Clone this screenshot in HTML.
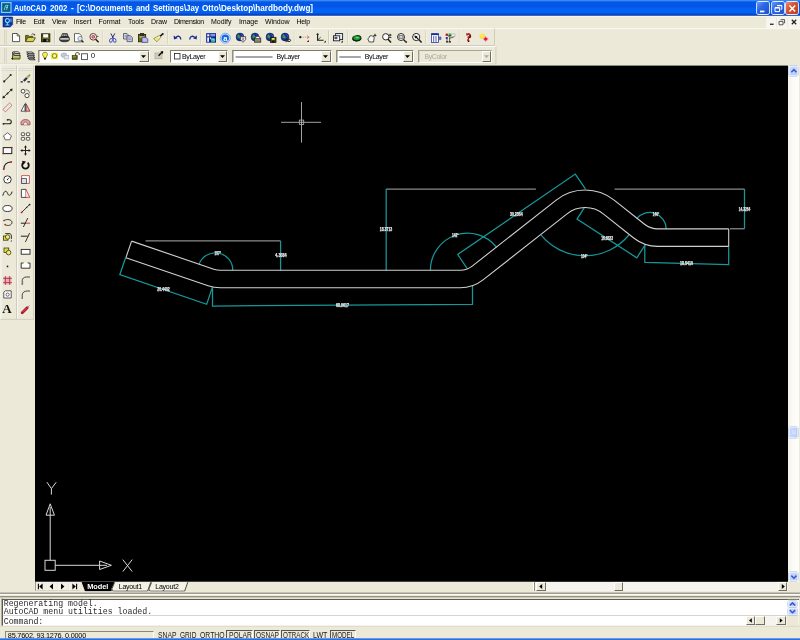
<!DOCTYPE html>
<html><head><meta charset="utf-8"><title>AutoCAD 2002 - hardbody.dwg</title>
<style>
html,body{margin:0;padding:0;background:#ece9d8;}
body{width:800px;height:640px;overflow:hidden;position:relative;font-family:'Liberation Sans',sans-serif;}
.a{position:absolute;display:block;}
.t{white-space:pre;}
svg{overflow:visible;}
#root{position:absolute;left:0;top:0;width:800px;height:640px;overflow:hidden;will-change:transform;}
</style></head><body><div id="root">
<svg class="a" style="left:0;top:0" width="800" height="17"><defs><linearGradient id="tg" x1="0" y1="0" x2="0" y2="1"><stop offset="0" stop-color="#4a9dff"/><stop offset="0.07" stop-color="#1a70f0"/><stop offset="0.15" stop-color="#0557e3"/><stop offset="0.42" stop-color="#0357e4"/><stop offset="0.58" stop-color="#0263f6"/><stop offset="0.8" stop-color="#025ff2"/><stop offset="0.89" stop-color="#024fda"/><stop offset="0.96" stop-color="#0138b4"/><stop offset="1" stop-color="#012a98"/></linearGradient></defs><rect x="0" y="0" width="800" height="15.8" fill="url(#tg)"/><rect x="0" y="15.9" width="800" height="1" fill="#f7f6f0"/></svg>
<svg class="a" style="left:1px;top:2px;" width="11" height="11" viewBox="0 0 11 11"><rect x="0.6" y="0.6" width="9.4" height="9.8" fill="#06607f" stroke="#86c9f4" stroke-width="1.2"/><path d="M3.2 8 L4.6 3.4 H7.4 M5 5.4 H7 M6.6 3.4 L5.6 8" stroke="#9fe0f0" stroke-width="0.8" fill="none"/></svg>
<span class="a t" id="t1" style="left:13.9px;top:3.80px;font-size:8.5px;line-height:8.5px;color:#fff;font-weight:bold;transform:scaleX(0.8576);transform-origin:0 0;">AutoCAD</span>
<span class="a t" id="t2" style="left:50px;top:3.80px;font-size:8.5px;line-height:8.5px;color:#fff;font-weight:bold;transform:scaleX(0.9249);transform-origin:0 0;">2002</span>
<span class="a t" id="t3" style="left:70.9px;top:3.80px;font-size:8.5px;line-height:8.5px;color:#fff;font-weight:bold;transform:scaleX(0.9846);transform-origin:0 0;">-</span>
<span class="a t" id="t4" style="left:77px;top:3.80px;font-size:8.5px;line-height:8.5px;color:#fff;font-weight:bold;transform:scaleX(0.9197);transform-origin:0 0;">[C:\Documents</span>
<span class="a t" id="t5" style="left:135.7px;top:3.80px;font-size:8.5px;line-height:8.5px;color:#fff;font-weight:bold;transform:scaleX(0.9190);transform-origin:0 0;">and</span>
<span class="a t" id="t6" style="left:152.6px;top:3.80px;font-size:8.5px;line-height:8.5px;color:#fff;font-weight:bold;transform:scaleX(0.9226);transform-origin:0 0;">Settings\Jay</span>
<span class="a t" id="t7" style="left:201.9px;top:3.80px;font-size:8.5px;line-height:8.5px;color:#fff;font-weight:bold;transform:scaleX(0.9576);transform-origin:0 0;">Otto\Desktop\hardbody.dwg]</span>
<div class="a" style="left:757.4px;top:2px;width:12px;height:12px;background:linear-gradient(135deg,#6c9cf5 0%,#2d68e6 40%,#1c4fd0 100%);border-radius:2px;box-shadow:0 0 0 0.9px #e4edff;"></div>
<svg class="a" style="left:757.1999999999999px;top:1.6px;" width="13" height="13" viewBox="0 0 13 13"><rect x="3" y="8.6" width="4.4" height="1.7" fill="#fff"/></svg>
<div class="a" style="left:771.8px;top:2px;width:12px;height:12px;background:linear-gradient(135deg,#6c9cf5 0%,#2d68e6 40%,#1c4fd0 100%);border-radius:2px;box-shadow:0 0 0 0.9px #e4edff;"></div>
<svg class="a" style="left:771.5999999999999px;top:1.6px;" width="13" height="13" viewBox="0 0 13 13"><path d="M5.2 3.4 h4.6 v3.8 h-1.2 M3 5.6 h4.6 v4 h-4.6 z" fill="none" stroke="#fff" stroke-width="1"/><path d="M5.2 3.6 h4.6 M3 5.9 h4.6" stroke="#fff" stroke-width="1.3"/></svg>
<div class="a" style="left:786.3px;top:2px;width:12px;height:12px;background:linear-gradient(135deg,#e8917a 0%,#d9532f 40%,#c13a18 100%);border-radius:2px;box-shadow:0 0 0 0.9px #e4edff;"></div>
<svg class="a" style="left:786.0999999999999px;top:1.6px;" width="13" height="13" viewBox="0 0 13 13"><path d="M3.4 3.6 L9.2 9.6 M9.2 3.6 L3.4 9.6" stroke="#fff" stroke-width="1.5"/></svg>
<svg class="a" style="left:2.5px;top:17.2px;" width="10" height="10.4" viewBox="0 0 10 10.4"><path d="M0 0 H9.6 V7.6 L7.2 10 H0 Z" fill="#0a3aa0"/><path d="M0 0 H9.6 V7.6 L7.2 10 H0 Z" fill="none" stroke="#052a80" stroke-width="0.6"/><circle cx="4.4" cy="3.6" r="2" fill="none" stroke="#7fd0ff" stroke-width="1.1"/><path d="M4.4 5.6 V8.6 M2.4 8 H6.4" stroke="#7fd0ff" stroke-width="1.1"/><path d="M8 1.6 V5" stroke="#7fd0ff" stroke-width="0.9"/></svg>
<span class="a t" id="t8" style="left:16px;top:17.97px;font-size:7px;line-height:7px;color:#000;letter-spacing:-0.366px;">File</span>
<span class="a t" id="t9" style="left:33.5px;top:17.97px;font-size:7px;line-height:7px;color:#000;letter-spacing:-0.304px;">Edit</span>
<span class="a t" id="t10" style="left:52px;top:17.97px;font-size:7px;line-height:7px;color:#000;letter-spacing:-0.156px;">View</span>
<span class="a t" id="t11" style="left:73.5px;top:17.97px;font-size:7px;line-height:7px;color:#000;letter-spacing:0.088px;">Insert</span>
<span class="a t" id="t12" style="left:98.5px;top:17.97px;font-size:7px;line-height:7px;color:#000;letter-spacing:-0.031px;">Format</span>
<span class="a t" id="t13" style="left:128px;top:17.97px;font-size:7px;line-height:7px;color:#000;letter-spacing:-0.076px;">Tools</span>
<span class="a t" id="t14" style="left:151px;top:17.97px;font-size:7px;line-height:7px;color:#000;letter-spacing:-0.098px;">Draw</span>
<span class="a t" id="t15" style="left:174px;top:17.97px;font-size:7px;line-height:7px;color:#000;letter-spacing:-0.362px;">Dimension</span>
<span class="a t" id="t16" style="left:211px;top:17.97px;font-size:7px;line-height:7px;color:#000;letter-spacing:-0.023px;">Modify</span>
<span class="a t" id="t17" style="left:239px;top:17.97px;font-size:7px;line-height:7px;color:#000;letter-spacing:-0.104px;">Image</span>
<span class="a t" id="t18" style="left:265px;top:17.97px;font-size:7px;line-height:7px;color:#000;letter-spacing:-0.074px;">Window</span>
<span class="a t" id="t19" style="left:296.5px;top:17.97px;font-size:7px;line-height:7px;color:#000;letter-spacing:-0.259px;">Help</span>
<svg class="a" style="left:766px;top:17px" width="34" height="11"><rect x="0.00" y="0.20" width="34.00" height="10.80" fill="#f6f5ef"/></svg>
<svg class="a" style="left:776px;top:17px" width="1" height="11"><rect x="0.30" y="0.60" width="0.70" height="10.00" fill="#e6e4d8"/></svg>
<svg class="a" style="left:787px;top:17px" width="1" height="11"><rect x="0.30" y="0.60" width="0.70" height="10.00" fill="#e6e4d8"/></svg>
<svg class="a" style="left:766px;top:17px;" width="34" height="10.5" viewBox="0 0 34 10.5"><rect x="4" y="6.6" width="3.6" height="1.3" fill="#222"/><path d="M14.6 2.6 h4 v3.4 h-1 M13 4.4 h4 v3.4 h-4 z" fill="none" stroke="#333" stroke-width="0.8"/><path d="M25.8 2.8 L30.2 7.2 M30.2 2.8 L25.8 7.2" stroke="#222" stroke-width="1.3"/></svg>
<svg class="a" style="left:0px;top:28px" width="800" height="2"><rect x="0.00" y="0.20" width="800.00" height="0.90" fill="#fbfaf6"/></svg>
<svg class="a" style="left:0px;top:45px" width="495" height="1"><rect x="0.00" y="0.10" width="494.60" height="0.70" fill="#c5c2b0"/></svg>
<svg class="a" style="left:494px;top:28px" width="1" height="18"><rect x="0.30" y="0.60" width="0.70" height="16.60" fill="#c5c2b0"/></svg>
<svg class="a" style="left:0px;top:46px" width="496" height="1"><rect x="0.00" y="0.00" width="496.00" height="0.80" fill="#fff"/></svg>
<svg class="a" style="left:0px;top:63px" width="496" height="2"><rect x="0.00" y="0.60" width="496.00" height="0.60" fill="#d9d6c4"/></svg>
<svg class="a" style="left:495px;top:46px" width="2" height="19"><rect x="0.60" y="0.40" width="0.70" height="18.00" fill="#c5c2b0"/></svg>
<svg class="a" style="left:3px;top:29px" width="1" height="16"><rect x="0.10" y="0.80" width="0.70" height="15.00" fill="#fdfcf8"/></svg>
<svg class="a" style="left:3px;top:29px" width="2" height="16"><rect x="0.80" y="0.80" width="0.60" height="15.00" fill="#b9b6a2"/></svg>
<svg class="a" style="left:5px;top:29px" width="1" height="16"><rect x="0.00" y="0.80" width="0.70" height="15.00" fill="#fdfcf8"/></svg>
<svg class="a" style="left:5px;top:29px" width="2" height="16"><rect x="0.70" y="0.80" width="0.60" height="15.00" fill="#b9b6a2"/></svg>
<svg class="a" style="left:3px;top:47px" width="1" height="17"><rect x="0.10" y="0.80" width="0.70" height="15.60" fill="#fdfcf8"/></svg>
<svg class="a" style="left:3px;top:47px" width="2" height="17"><rect x="0.80" y="0.80" width="0.60" height="15.60" fill="#b9b6a2"/></svg>
<svg class="a" style="left:5px;top:47px" width="1" height="17"><rect x="0.00" y="0.80" width="0.70" height="15.60" fill="#fdfcf8"/></svg>
<svg class="a" style="left:5px;top:47px" width="2" height="17"><rect x="0.70" y="0.80" width="0.60" height="15.60" fill="#b9b6a2"/></svg>
<svg class="a" style="left:0px;top:64px" width="35" height="256"><rect x="0.00" y="0.80" width="35.00" height="255.00" fill="#ece9d8"/></svg>
<svg class="a" style="left:12px;top:33px;" width="11" height="11" viewBox="0 0 11 11"><path d="M0.5 0.5 H5.2 L7.6 3 V8.6 H0.5 Z" fill="#fff" stroke="#333" stroke-width="0.8"/><path d="M5.2 0.5 V3 H7.6" fill="none" stroke="#333" stroke-width="0.7"/></svg>
<svg class="a" style="left:25px;top:33px;" width="11" height="11" viewBox="0 0 11 11"><path d="M0.6 8.6 V2.4 H3.4 L4.2 3.4 H7.8 V4.6" fill="#7a7a18" stroke="#3a3a08" stroke-width="0.8"/><path d="M0.6 8.6 L2.6 4.8 H10.4 L8.2 8.6 Z" fill="#d4d448" stroke="#3a3a08" stroke-width="0.8"/><path d="M3.2 5.6 H9" stroke="#f4f49a" stroke-width="0.6"/><path d="M6.4 1.8 C7.4 0.4 9 0.6 9.6 2" stroke="#222" stroke-width="0.7" fill="none"/><path d="M8.6 2.2 L10.2 2.6 L10 0.9 Z" fill="#111"/></svg>
<svg class="a" style="left:41px;top:33px;" width="11" height="11" viewBox="0 0 11 11"><rect x="0.5" y="0.8" width="8.4" height="8" fill="#4a4a10" stroke="#1e1e00" stroke-width="0.8"/><rect x="2.2" y="1.2" width="5" height="3.4" fill="#fff"/><rect x="2.2" y="5.9" width="5" height="3" fill="#0a0a0a"/><rect x="5.6" y="6.4" width="1" height="2" fill="#ddd"/><path d="M1 5.2 H8.4" stroke="#9a9a30" stroke-width="0.6"/></svg>
<svg class="a" style="left:54px;top:30px" width="1" height="14"><rect x="0.30" y="0.50" width="0.65" height="13.50" fill="#bdb9a4"/></svg>
<svg class="a" style="left:54px;top:30px" width="2" height="14"><rect x="0.95" y="0.50" width="0.65" height="13.50" fill="#fbfaf4"/></svg>
<svg class="a" style="left:58.8px;top:33px;" width="11" height="11" viewBox="0 0 11 11"><path d="M2.2 3.6 L3.4 0.6 H8.2 L9.2 3.6 Z" fill="#555" stroke="#2a2a2a" stroke-width="0.7"/><path d="M4 1.4 L3.4 3 M5.6 1.4 L5.2 3 M7.2 1.4 L7 3" stroke="#ddd" stroke-width="0.7"/><path d="M0.6 5.6 C0.6 4 2 3.6 2.8 3.6 H8.6 C9.6 3.6 10.4 4.2 10.4 5.6 V7.2 C9 9.4 2 9.4 0.6 7.2 Z" fill="#3a3a3a" stroke="#1a1a1a" stroke-width="0.6"/><path d="M1.2 5.9 H9.8" stroke="#f4f4f4" stroke-width="1.3"/></svg>
<svg class="a" style="left:73.8px;top:33px;" width="11" height="11" viewBox="0 0 11 11"><path d="M0.5 0.6 H5.2 L7.6 2.8 V8.8 H0.5 Z" fill="#fff" stroke="#444" stroke-width="0.8"/><circle cx="6" cy="5.6" r="2.2" fill="#d4e8fc" stroke="#778" stroke-width="0.7"/><path d="M7.6 7.4 L9.4 9.4" stroke="#111" stroke-width="1.3"/></svg>
<svg class="a" style="left:89.4px;top:33px;" width="11" height="11" viewBox="0 0 11 11"><circle cx="4.2" cy="3.8" r="3.3" fill="#fff" stroke="#4a4436" stroke-width="1"/><circle cx="4.2" cy="3.8" r="1.9" fill="#d03048"/><path d="M3.4 3.8 H5 M4.2 3 V4.6" stroke="#fbd0d0" stroke-width="0.6"/><path d="M6.6 6.2 L9.6 9.2" stroke="#222" stroke-width="1.5"/><path d="M7.4 3.4 H9.4" stroke="#555" stroke-width="1"/></svg>
<svg class="a" style="left:102px;top:30px" width="2" height="14"><rect x="0.70" y="0.50" width="0.65" height="13.50" fill="#bdb9a4"/></svg>
<svg class="a" style="left:103px;top:30px" width="1" height="14"><rect x="0.35" y="0.50" width="0.65" height="13.50" fill="#fbfaf4"/></svg>
<svg class="a" style="left:109.4px;top:33px;" width="11" height="11" viewBox="0 0 11 11"><path d="M1.8 0.4 L4.6 5.8 M5.8 0.4 L3 5.8" stroke="#2a2a7a" stroke-width="1"/><ellipse cx="2" cy="7.4" rx="1.4" ry="1.9" fill="none" stroke="#4a55c8" stroke-width="0.95" transform="rotate(20 2 7.4)"/><ellipse cx="5.6" cy="7.4" rx="1.4" ry="1.9" fill="none" stroke="#4a55c8" stroke-width="0.95" transform="rotate(-20 5.6 7.4)"/></svg>
<svg class="a" style="left:123px;top:33px;" width="11" height="11" viewBox="0 0 11 11"><path d="M0.5 0.5 H4 L5.6 2.2 V6 H0.5 Z" fill="#d0d4ec" stroke="#3a3a55" stroke-width="0.7"/><path d="M1.6 2.4 H4 M1.6 3.8 H4.4" stroke="#667" stroke-width="0.5"/><path d="M4 2.8 H7.6 L9.4 4.6 V8.6 H4 Z" fill="#c4c8ee" stroke="#3a3a55" stroke-width="0.7"/><path d="M5.2 5 H8 M5.2 6.4 H8.2" stroke="#667" stroke-width="0.5"/></svg>
<svg class="a" style="left:138px;top:33px;" width="11" height="11" viewBox="0 0 11 11"><rect x="0.5" y="1.4" width="7.2" height="7.4" fill="#6a6a1a" stroke="#222200" stroke-width="0.8"/><rect x="2.2" y="0.3" width="3.6" height="2" fill="#333" stroke="#111" stroke-width="0.5"/><rect x="1.6" y="3" width="4.8" height="2" fill="#a8a850"/><path d="M4 4.4 H7.8 L9.8 6 V9.4 H4 Z" fill="#b8bcf4" stroke="#3a3a80" stroke-width="0.7"/></svg>
<svg class="a" style="left:153px;top:33px;" width="11" height="11" viewBox="0 0 11 11"><path d="M9.6 1 L6.8 3.6" stroke="#111" stroke-width="1.5"/><circle cx="9.8" cy="0.9" r="0.9" fill="#111"/><path d="M6.4 2.4 L8 4 L4 8.8 L0.6 5.6 Z" fill="#f2f2a4" stroke="#7a7a30" stroke-width="0.7"/><path d="M2 6.4 L3.2 7.6 M3.4 5 L4.8 6.4" stroke="#a8a850" stroke-width="0.5"/></svg>
<svg class="a" style="left:167px;top:30px" width="1" height="14"><rect x="0.10" y="0.50" width="0.65" height="13.50" fill="#bdb9a4"/></svg>
<svg class="a" style="left:167px;top:30px" width="2" height="14"><rect x="0.75" y="0.50" width="0.65" height="13.50" fill="#fbfaf4"/></svg>
<svg class="a" style="left:172.5px;top:33px;" width="11" height="11" viewBox="0 0 11 11"><path d="M2.8 4.6 C4.4 2.4 7.8 2.8 7.8 6.4" fill="none" stroke="#1c2a9a" stroke-width="1.35"/><path d="M0.6 2.6 L1 6.6 L4.6 5.2 Z" fill="#1c2a9a"/></svg>
<svg class="a" style="left:187.5px;top:33px;" width="11" height="11" viewBox="0 0 11 11"><path d="M6.8 4.6 C5.2 2.4 1.8 2.8 1.8 6.4" fill="none" stroke="#1c2a9a" stroke-width="1.35"/><path d="M9 2.6 L8.6 6.6 L5 5.2 Z" fill="#1c2a9a"/></svg>
<svg class="a" style="left:200px;top:30px" width="1" height="14"><rect x="0.10" y="0.50" width="0.65" height="13.50" fill="#bdb9a4"/></svg>
<svg class="a" style="left:200px;top:30px" width="2" height="14"><rect x="0.75" y="0.50" width="0.65" height="13.50" fill="#fbfaf4"/></svg>
<svg class="a" style="left:205.6px;top:33px;" width="11" height="11" viewBox="0 0 11 11"><rect x="0.2" y="0.2" width="9.8" height="9.4" fill="#0c1a8c"/><rect x="1.2" y="1.2" width="2.2" height="2.2" fill="#e8f0ff"/><rect x="4.4" y="1" width="4.8" height="2.4" fill="#7a9ae8"/><rect x="1.2" y="4.4" width="1.8" height="4.4" fill="#f0f4ff"/><rect x="3.8" y="4.2" width="1.4" height="2" fill="#b8c8f8"/><circle cx="7" cy="7" r="2.3" fill="#30b0a0"/><path d="M5.6 6.4 C6.6 5.6 7.8 7.6 8.8 7" stroke="#d8ffe8" stroke-width="0.6" fill="none"/></svg>
<svg class="a" style="left:220px;top:32.6px;" width="11" height="11" viewBox="0 0 11 11"><circle cx="5.3" cy="5.2" r="5" fill="#d4e6ff" stroke="#4a90f0" stroke-width="0.7"/><circle cx="5.3" cy="5.2" r="3.7" fill="#1466e0"/><text x="5.3" y="7.6" font-family="Liberation Sans,sans-serif" font-weight="bold" font-size="7.6" text-anchor="middle" fill="#fff">a</text></svg>
<svg class="a" style="left:235.6px;top:33px;" width="11" height="11" viewBox="0 0 11 11"><circle cx="4" cy="4" r="3.9" fill="#1c2c9c" stroke="#101850" stroke-width="0.6"/><path d="M2.2 1.2 C4.2 1.6 3.4 3.6 5.2 4 C4.6 6 2.8 6 1.4 4.6 C1.2 3.4 1.4 2.2 2.2 1.2 Z" fill="#2c9a50"/><path d="M5.4 1.4 C6.4 1.8 6.8 2.8 6.6 3.6" stroke="#5878e0" stroke-width="0.6" fill="none"/><path d="M4.4 3.6 H9.6 V6.6 L7 9.4 L4.4 6.6 Z" fill="#e8e8e8" stroke="#223" stroke-width="0.7"/><path d="M7 4.6 V7.6" stroke="#223" stroke-width="0.8"/></svg>
<svg class="a" style="left:250.6px;top:33px;" width="11" height="11" viewBox="0 0 11 11"><circle cx="4" cy="4" r="3.9" fill="#1c2c9c" stroke="#101850" stroke-width="0.6"/><path d="M2.2 1.2 C4.2 1.6 3.4 3.6 5.2 4 C4.6 6 2.8 6 1.4 4.6 C1.2 3.4 1.4 2.2 2.2 1.2 Z" fill="#2c9a50"/><path d="M5.4 1.4 C6.4 1.8 6.8 2.8 6.6 3.6" stroke="#5878e0" stroke-width="0.6" fill="none"/><rect x="3.4" y="5" width="6.4" height="4.2" fill="#8a8a6a" stroke="#222" stroke-width="0.7"/><path d="M4.6 5 L5.2 3.4 H8.4 L8.8 5" fill="#fff" stroke="#222" stroke-width="0.6"/></svg>
<svg class="a" style="left:265.6px;top:33px;" width="11" height="11" viewBox="0 0 11 11"><circle cx="4" cy="4" r="3.9" fill="#1c2c9c" stroke="#101850" stroke-width="0.6"/><path d="M2.2 1.2 C4.2 1.6 3.4 3.6 5.2 4 C4.6 6 2.8 6 1.4 4.6 C1.2 3.4 1.4 2.2 2.2 1.2 Z" fill="#2c9a50"/><path d="M5.4 1.4 C6.4 1.8 6.8 2.8 6.6 3.6" stroke="#5878e0" stroke-width="0.6" fill="none"/><rect x="4.4" y="4.6" width="5.6" height="5" fill="#4a4a10" stroke="#111" stroke-width="0.7"/><rect x="5.8" y="5" width="2.8" height="1.8" fill="#e8e870"/><rect x="6" y="7.8" width="2.4" height="1.6" fill="#111"/></svg>
<svg class="a" style="left:280.6px;top:33px;" width="11" height="11" viewBox="0 0 11 11"><circle cx="4" cy="4" r="3.9" fill="#1c2c9c" stroke="#101850" stroke-width="0.6"/><path d="M2.2 1.2 C4.2 1.6 3.4 3.6 5.2 4 C4.6 6 2.8 6 1.4 4.6 C1.2 3.4 1.4 2.2 2.2 1.2 Z" fill="#2c9a50"/><path d="M5.4 1.4 C6.4 1.8 6.8 2.8 6.6 3.6" stroke="#5878e0" stroke-width="0.6" fill="none"/><path d="M4.2 7.4 C4.2 5.6 7 5.6 7 7.4 C7 9 4.2 9 4.2 7.4 M6.6 7.4 C6.6 5.6 9.6 5.6 9.6 7.4 C9.6 9 6.6 9 6.6 7.4" fill="none" stroke="#222" stroke-width="1"/></svg>
<svg class="a" style="left:293px;top:30px" width="2" height="14"><rect x="0.90" y="0.50" width="0.65" height="13.50" fill="#bdb9a4"/></svg>
<svg class="a" style="left:294px;top:30px" width="2" height="14"><rect x="0.55" y="0.50" width="0.65" height="13.50" fill="#fbfaf4"/></svg>
<svg class="a" style="left:299px;top:33px;" width="11" height="11" viewBox="0 0 11 11"><path d="M1.6 4.2 H9.6" stroke="#d87878" stroke-width="0.7" stroke-dasharray="1.4 0.7"/><circle cx="1.3" cy="4.2" r="1.1" fill="#111"/><path d="M8 2.8 L10.2 4.2 L8 5.6" fill="none" stroke="#c85050" stroke-width="0.7"/><path d="M9.8 7 L9.8 9 L7.8 9 Z" fill="#111"/></svg>
<svg class="a" style="left:315.6px;top:33px;" width="11" height="11" viewBox="0 0 11 11"><path d="M1.6 0.8 V7.2 H7.6" fill="none" stroke="#1a1a1a" stroke-width="1.1"/><path d="M1.6 7.2 L4.8 4" stroke="#222" stroke-width="0.7"/><path d="M9.8 7.4 L9.8 9.4 L7.8 9.4 Z" fill="#111"/><path d="M0.4 2 L1.6 0.2 L2.8 2" fill="none" stroke="#222" stroke-width="0.6"/></svg>
<svg class="a" style="left:328px;top:30px" width="1" height="14"><rect x="0.30" y="0.50" width="0.65" height="13.50" fill="#bdb9a4"/></svg>
<svg class="a" style="left:328px;top:30px" width="2" height="14"><rect x="0.95" y="0.50" width="0.65" height="13.50" fill="#fbfaf4"/></svg>
<svg class="a" style="left:333px;top:33px;" width="11" height="11" viewBox="0 0 11 11"><rect x="2.6" y="0.6" width="7" height="6" fill="#eef0f8" stroke="#1a1a2a" stroke-width="0.9"/><rect x="0.5" y="2.8" width="6.2" height="5" fill="#fff" stroke="#1a1a2a" stroke-width="0.9"/><rect x="1.4" y="3.8" width="3" height="2.4" fill="#556"/><path d="M9.8 7.6 L9.8 9.6 L7.8 9.6 Z" fill="#111"/></svg>
<svg class="a" style="left:347px;top:30px" width="1" height="14"><rect x="0.10" y="0.50" width="0.65" height="13.50" fill="#bdb9a4"/></svg>
<svg class="a" style="left:347px;top:30px" width="2" height="14"><rect x="0.75" y="0.50" width="0.65" height="13.50" fill="#fbfaf4"/></svg>
<svg class="a" style="left:352px;top:33px;" width="11" height="11" viewBox="0 0 11 11"><ellipse cx="4.8" cy="5.2" rx="4.2" ry="2.6" fill="#1c9030" stroke="#083c10" stroke-width="1" transform="rotate(-8 4.8 5.2)"/><ellipse cx="5.2" cy="4.6" rx="1.8" ry="0.9" fill="#6fd07a"/><path d="M0.6 5.8 C2 8.6 7.6 8.6 9.2 5.4" fill="none" stroke="#04280a" stroke-width="1.1"/></svg>
<svg class="a" style="left:367px;top:33px;" width="11" height="11" viewBox="0 0 11 11"><path d="M2.2 9 L0.8 5.8 L2.2 4.6 L2.8 3 L4.2 2.6 L5.2 3.2 L6.4 3 L7.2 4.8 L6.6 9 Z" fill="#f6f6f2" stroke="#2a2a2a" stroke-width="0.8"/><path d="M8 0.2 L8.5 1.7 L10 2.2 L8.5 2.7 L8 4.2 L7.5 2.7 L6 2.2 L7.5 1.7 Z" fill="#111"/></svg>
<svg class="a" style="left:382px;top:33px;" width="11" height="11" viewBox="0 0 11 11"><circle cx="3.8" cy="3.8" r="3.2" fill="#fbfbfb" stroke="#2a2a2a" stroke-width="1"/><path d="M6 6.2 L9 9.4" stroke="#1a1a1a" stroke-width="1.5"/><path d="M8.2 0.8 V3.4 M6.9 2.1 H9.5 M7 4.6 H9.4" stroke="#111" stroke-width="0.8"/></svg>
<svg class="a" style="left:397px;top:33px;" width="11" height="11" viewBox="0 0 11 11"><circle cx="4" cy="4" r="3.5" fill="#fbfbfb" stroke="#2a2a2a" stroke-width="1"/><rect x="2" y="2.8" width="4" height="2.4" fill="#eee" stroke="#333" stroke-width="0.7"/><path d="M6.6 6.6 L8.6 8.8" stroke="#1a1a1a" stroke-width="1.4"/><path d="M10 7.8 L10 9.8 L8 9.8 Z" fill="#111"/></svg>
<svg class="a" style="left:412px;top:33px;" width="11" height="11" viewBox="0 0 11 11"><circle cx="4.2" cy="4" r="3.6" fill="#fbfbfb" stroke="#2a2a2a" stroke-width="1"/><path d="M2.2 2.6 L5.6 3.2 L3.2 5.6 Z" fill="#111"/><path d="M4 4 L6.2 6" stroke="#111" stroke-width="1.1"/><path d="M6.8 6.6 L9.6 9.6" stroke="#1a1a1a" stroke-width="1.5"/></svg>
<svg class="a" style="left:425px;top:30px" width="1" height="14"><rect x="0.10" y="0.50" width="0.65" height="13.50" fill="#bdb9a4"/></svg>
<svg class="a" style="left:425px;top:30px" width="2" height="14"><rect x="0.75" y="0.50" width="0.65" height="13.50" fill="#fbfaf4"/></svg>
<svg class="a" style="left:430.6px;top:33px;" width="11" height="11" viewBox="0 0 11 11"><rect x="0.5" y="0.6" width="7" height="8.8" fill="#fff" stroke="#2a3aa0" stroke-width="0.8"/><rect x="0.5" y="0.6" width="7" height="1.5" fill="#1a2a90"/><path d="M2.7 3 V8.8 M5 3 V8.8" stroke="#4a5ac0" stroke-width="1"/><path d="M8.2 4 H10 V6.6 H8.2 Z" fill="#6a78c0" stroke="#2a3a80" stroke-width="0.5"/></svg>
<svg class="a" style="left:445px;top:33px;" width="11" height="11" viewBox="0 0 11 11"><rect x="0.6" y="0.6" width="2.4" height="2.4" fill="#b03030"/><rect x="3.6" y="0.4" width="2.2" height="3.4" fill="#38a038"/><rect x="0.8" y="4" width="2" height="2" fill="#3030b0"/><path d="M3 3 L7.6 2 M4.6 4 V8.4 M2 6 V8.4 M4.6 5.4 L9.6 3.6" stroke="#222" stroke-width="0.7"/><rect x="6.4" y="1" width="3.6" height="2.4" fill="#f0f0f0" stroke="#888" stroke-width="0.4"/><path d="M1 8.8 H3.2 M3.8 8.8 H6" stroke="#111" stroke-width="1.2"/></svg>
<svg class="a" style="left:458px;top:30px" width="2" height="14"><rect x="0.90" y="0.50" width="0.65" height="13.50" fill="#bdb9a4"/></svg>
<svg class="a" style="left:459px;top:30px" width="2" height="14"><rect x="0.55" y="0.50" width="0.65" height="13.50" fill="#fbfaf4"/></svg>
<span class="a" style="left:465.6px;top:31.0px;font-size:11.8px;line-height:12px;font-weight:bold;color:#c41414;font-family:'Liberation Serif',serif;text-shadow:0.5px 0.5px 0 #400;">?</span>
<svg class="a" style="left:479.4px;top:33px;" width="11" height="11" viewBox="0 0 11 11"><rect x="1.4" y="1.6" width="8" height="7.6" fill="#e4e8f4" opacity="0.7"/><circle cx="3.2" cy="3.2" r="2.7" fill="#f8e23c"/><circle cx="2.6" cy="2.6" r="1" fill="#fdf6a0"/><path d="M6.6 2.8 L10 6 L6.6 9.2 L3.4 6 Z" fill="#f6b4bc"/><path d="M6.6 4 L8.8 6 L6.6 8 L4.6 6 Z" fill="#e41c1c"/></svg>
<svg class="a" style="left:10.9px;top:51.2px;" width="11" height="11" viewBox="0 0 11 11"><path d="M2.4 0.8 H7.2 L9.2 2.6 H4.4 Z" fill="#fafafa" stroke="#1a1a1a" stroke-width="0.8"/><path d="M2 2.8 H7.4 L9.4 4.6 H4 Z" fill="#eee" stroke="#1a1a1a" stroke-width="0.8"/><path d="M1.6 4.8 H9 V8 H1.6 Z" fill="#dede50" stroke="#2a2a00" stroke-width="0.8"/><path d="M2.2 5.9 H8.4" stroke="#fafae0" stroke-width="0.6"/><path d="M2.2 7 H8.4" stroke="#4a4a08" stroke-width="0.6"/><path d="M0 7.6 L2 9 L1.9 6.6 Z" fill="#111"/><path d="M1.6 0.8 V4.6" stroke="#1a1a1a" stroke-width="0.8"/></svg>
<svg class="a" style="left:25.9px;top:51.2px;" width="11" height="11" viewBox="0 0 11 11"><path d="M0.6 1 H6 L8.4 2.8 H3 Z" fill="#fafafa" stroke="#1a1a1a" stroke-width="0.8"/><path d="M0.8 3 H6.2 L8.6 4.8 H3.2 Z" fill="#e8e8e8" stroke="#1a1a1a" stroke-width="0.8"/><path d="M1 5 H6.6 L9 6.8 H3.4 Z" fill="#dcdcdc" stroke="#1a1a1a" stroke-width="0.8"/><path d="M1.8 7.2 H7 L9.2 8.8 H4 Z" fill="#ccc" stroke="#1a1a1a" stroke-width="0.8"/></svg>
<svg class="a" style="left:2.3px;top:73.1px;" width="11" height="11" viewBox="0 0 11 11"><path d="M2.2 8.4 L8.7 2" stroke="#222" stroke-width="0.9"/><circle cx="2.2" cy="8.4" r="1.05" fill="#222"/><circle cx="8.7" cy="2" r="1.05" fill="#222"/></svg>
<svg class="a" style="left:2.3px;top:87.5px;" width="11" height="11" viewBox="0 0 11 11"><path d="M1.4 9.4 L9.6 1.6" stroke="#222" stroke-width="0.9"/><path d="M0.4 10.4 L0.9 7.4 L3.4 9.8 Z M10.6 0.6 L10.1 3.6 L7.6 1.2 Z" fill="#222"/><circle cx="5.5" cy="5.5" r="0.9" fill="#222"/></svg>
<svg class="a" style="left:2.3px;top:101.89999999999999px;" width="11" height="11" viewBox="0 0 11 11"><path d="M1 7.4 L7.6 1 L10 3.4 L3.4 9.8 Z" fill="#fbf4f4" stroke="#9a4a4a" stroke-width="0.7"/><path d="M2.4 8.4 L8.6 2.4" stroke="#caa" stroke-width="0.5"/></svg>
<svg class="a" style="left:2.3px;top:116.3px;" width="11" height="11" viewBox="0 0 11 11"><path d="M1.4 7.8 H7.2 C10 7.8 10 3.8 7.2 3.8 H6" fill="none" stroke="#222" stroke-width="1.1"/><circle cx="1.4" cy="7.8" r="0.9" fill="#222"/><circle cx="5.6" cy="3.8" r="0.9" fill="#222"/></svg>
<svg class="a" style="left:2.3px;top:130.7px;" width="11" height="11" viewBox="0 0 11 11"><path d="M5.5 1.8 L9.4 4.8 L7.8 8.8 H3.2 L1.6 4.8 Z" fill="#fff" stroke="#3a3a3a" stroke-width="0.75"/></svg>
<svg class="a" style="left:2.3px;top:145.1px;" width="11" height="11" viewBox="0 0 11 11"><rect x="1.2" y="2.6" width="8.6" height="6" fill="#f8f8f8" stroke="#222" stroke-width="1"/><circle cx="1.2" cy="8.6" r="0.8" fill="#c02020"/><circle cx="9.8" cy="2.6" r="0.8" fill="#c02020"/></svg>
<svg class="a" style="left:2.3px;top:159.5px;" width="11" height="11" viewBox="0 0 11 11"><path d="M1.8 9 C1.8 4.8 4.8 2 9 2" fill="none" stroke="#222" stroke-width="1.1"/><circle cx="1.8" cy="9.2" r="0.9" fill="#c02020"/><circle cx="9.2" cy="2" r="0.9" fill="#c02020"/></svg>
<svg class="a" style="left:2.3px;top:173.89999999999998px;" width="11" height="11" viewBox="0 0 11 11"><circle cx="5.5" cy="5.5" r="3.7" fill="#fff" stroke="#222" stroke-width="0.9"/><path d="M5.5 5.5 L7.6 3.4" stroke="#222" stroke-width="0.7"/><circle cx="5.5" cy="5.5" r="0.7" fill="#222"/></svg>
<svg class="a" style="left:2.3px;top:188.3px;" width="11" height="11" viewBox="0 0 11 11"><path d="M0.8 7.6 C2.4 2 4.4 2.4 5.6 5.4 C6.8 8.4 8.6 8 10.2 3.6" fill="none" stroke="#222" stroke-width="1"/></svg>
<svg class="a" style="left:2.3px;top:202.7px;" width="11" height="11" viewBox="0 0 11 11"><ellipse cx="5.5" cy="5.5" rx="4.6" ry="3" fill="#fff" stroke="#222" stroke-width="0.9"/></svg>
<svg class="a" style="left:2.3px;top:217.1px;" width="11" height="11" viewBox="0 0 11 11"><path d="M3 7.6 C6 9.6 10 8 10 5.4 C10 2.6 5 1.6 2 3.6" fill="none" stroke="#222" stroke-width="0.9"/><circle cx="3" cy="7.6" r="0.8" fill="#c02020"/><circle cx="2" cy="3.6" r="0.8" fill="#c02020"/></svg>
<svg class="a" style="left:2.3px;top:231.5px;" width="11" height="11" viewBox="0 0 11 11"><rect x="1.4" y="4" width="4.6" height="4.2" fill="#e0e040" stroke="#222" stroke-width="0.7"/><circle cx="5.6" cy="5" r="2.2" fill="#f0f060" stroke="#222" stroke-width="0.7"/><path d="M3.2 1.6 H7 C8.8 1.6 9.4 2.6 9.4 4 V7" fill="none" stroke="#222" stroke-width="0.9"/><path d="M8.4 9.4 L9.8 9.4 L9.8 8 Z" fill="#222"/></svg>
<svg class="a" style="left:2.3px;top:245.9px;" width="11" height="11" viewBox="0 0 11 11"><rect x="2" y="2" width="4.8" height="4.4" fill="#e0e040" stroke="#222" stroke-width="0.7"/><circle cx="6.6" cy="6.6" r="2.3" fill="#f0f060" stroke="#222" stroke-width="0.7"/></svg>
<svg class="a" style="left:2.3px;top:260.3px;" width="11" height="11" viewBox="0 0 11 11"><circle cx="5.5" cy="6.4" r="0.9" fill="#222"/></svg>
<svg class="a" style="left:2.3px;top:274.7px;" width="11" height="11" viewBox="0 0 11 11"><rect x="1.6" y="1.6" width="7.8" height="7.8" fill="#eeaab6"/><path d="M1 3.4 H10 M1 7.6 H10 M3.4 1 V10 M7.6 1 V10" stroke="#a02c3c" stroke-width="0.75"/></svg>
<svg class="a" style="left:2.3px;top:289.1px;" width="11" height="11" viewBox="0 0 11 11"><path d="M1.8 9 V3.2 L3.4 1.8 H9.2 V9 Z" fill="#fff" stroke="#333" stroke-width="0.8"/><circle cx="5.6" cy="5.6" r="1.6" fill="none" stroke="#333" stroke-width="0.7"/></svg>
<span class="a" style="left:2.2px;top:302.2px;font-size:13px;line-height:13px;font-weight:bold;color:#111;font-family:'Liberation Serif',serif;">A</span>
<svg class="a" style="left:19.5px;top:73.1px;" width="11" height="11" viewBox="0 0 11 11"><path d="M3.8 8 L7 4.8" stroke="#34226e" stroke-width="2.3"/><path d="M6.8 5 L9.2 2.4" stroke="#a8b838" stroke-width="2.2"/><path d="M9 2.8 L10 1.6" stroke="#5a8a2a" stroke-width="1.4"/><path d="M0.6 8.9 H2.8 M7.4 8.9 H10" stroke="#1a1a1a" stroke-width="1.1"/></svg>
<svg class="a" style="left:19.5px;top:87.5px;" width="11" height="11" viewBox="0 0 11 11"><circle cx="3" cy="3.2" r="1.9" fill="#fff" stroke="#222" stroke-width="0.8"/><circle cx="7" cy="7.6" r="2.1" fill="#fff" stroke="#222" stroke-width="0.8"/><path d="M5.6 1.6 L8.6 2.6 L9.6 5.4" fill="none" stroke="#222" stroke-width="0.6"/></svg>
<svg class="a" style="left:19.5px;top:101.89999999999999px;" width="11" height="11" viewBox="0 0 11 11"><path d="M5 1.8 L1 9.2 H5 Z" fill="#fff" stroke="#333" stroke-width="0.8"/><path d="M6 1.8 L10 9.2 H6 Z" fill="#e8b0b0" stroke="#7a3030" stroke-width="0.8"/><path d="M5.5 0.6 V10.4" stroke="#333" stroke-width="0.5"/></svg>
<svg class="a" style="left:19.5px;top:116.3px;" width="11" height="11" viewBox="0 0 11 11"><path d="M1 8.8 V6.6 C1 2.6 10 2.6 10 6.6 V8.8 Z" fill="#d8a4a4" stroke="#8a4848" stroke-width="0.8"/><path d="M3.6 8.8 V7.4 C3.6 5.6 7.4 5.6 7.4 7.4 V8.8" fill="#f4e8e8" stroke="#8a4848" stroke-width="0.7"/></svg>
<svg class="a" style="left:19.5px;top:130.7px;" width="11" height="11" viewBox="0 0 11 11"><rect x="1.3" y="1.8" width="3.3" height="2.8" rx="0.5" fill="#fff" stroke="#2a2a2a" stroke-width="0.75"/><rect x="6.4" y="1.8" width="3.3" height="2.8" rx="0.5" fill="#fff" stroke="#2a2a2a" stroke-width="0.75"/><rect x="1.3" y="6.4" width="3.3" height="2.8" rx="0.5" fill="#fff" stroke="#2a2a2a" stroke-width="0.75"/><rect x="6.4" y="6.4" width="3.3" height="2.8" rx="0.5" fill="#fff" stroke="#2a2a2a" stroke-width="0.75"/></svg>
<svg class="a" style="left:19.5px;top:145.1px;" width="11" height="11" viewBox="0 0 11 11"><path d="M5.5 1 V10 M1 5.5 H10" stroke="#222" stroke-width="1"/><path d="M5.5 0.2 L7 2.4 H4 Z M5.5 10.8 L7 8.6 H4 Z M0.2 5.5 L2.4 4 V7 Z M10.8 5.5 L8.6 4 V7 Z" fill="#222"/></svg>
<svg class="a" style="left:19.5px;top:159.5px;" width="11" height="11" viewBox="0 0 11 11"><path d="M7.6 2.8 A3.3 3.3 0 1 1 3.4 2.8" fill="none" stroke="#111" stroke-width="1.8"/><path d="M2 0.8 L6 1.6 L3.4 4.8 Z" fill="#111"/></svg>
<svg class="a" style="left:19.5px;top:173.89999999999998px;" width="11" height="11" viewBox="0 0 11 11"><path d="M1.6 1.6 H9.4 V9.4 H1.6 Z" fill="#fff" stroke="#c03838" stroke-width="0.8"/><rect x="1.6" y="4.6" width="4.8" height="4.8" fill="#d8e0f4" stroke="#444" stroke-width="0.8"/></svg>
<svg class="a" style="left:19.5px;top:188.3px;" width="11" height="11" viewBox="0 0 11 11"><path d="M1.4 1.4 H6 V9.4 H1.4 Z" fill="#fff" stroke="#222" stroke-width="0.8"/><path d="M6 1.6 L9.8 9.4 H6" fill="#f8e0e0" stroke="#c02020" stroke-width="0.7"/></svg>
<svg class="a" style="left:19.5px;top:202.7px;" width="11" height="11" viewBox="0 0 11 11"><path d="M1.6 9.4 L9.6 1.6" stroke="#222" stroke-width="0.9"/><circle cx="1.6" cy="9.4" r="0.9" fill="#c02020"/><circle cx="9.6" cy="1.6" r="0.9" fill="#222"/><circle cx="6.6" cy="4.4" r="0.7" fill="#222"/></svg>
<svg class="a" style="left:19.5px;top:217.1px;" width="11" height="11" viewBox="0 0 11 11"><path d="M0.8 6.2 H6" stroke="#222" stroke-width="1"/><path d="M6 6.2 H10.2" stroke="#c02020" stroke-width="0.8"/><path d="M3.4 10 L7.8 1" stroke="#222" stroke-width="0.9"/></svg>
<svg class="a" style="left:19.5px;top:231.5px;" width="11" height="11" viewBox="0 0 11 11"><path d="M0.8 4.2 H7.4" stroke="#222" stroke-width="1"/><path d="M5.4 10 L9.6 1" stroke="#222" stroke-width="0.9"/><path d="M7.2 4.2 H8.6" stroke="#c02020" stroke-width="0.8"/></svg>
<svg class="a" style="left:19.5px;top:245.9px;" width="11" height="11" viewBox="0 0 11 11"><rect x="1.2" y="3.4" width="8.8" height="4.8" fill="#fff" stroke="#222" stroke-width="0.9"/></svg>
<svg class="a" style="left:19.5px;top:260.3px;" width="11" height="11" viewBox="0 0 11 11"><path d="M3.6 3 H1.2 V8.2 H10 V3 H7.6" fill="#fff" stroke="#222" stroke-width="0.9"/></svg>
<svg class="a" style="left:19.5px;top:274.7px;" width="11" height="11" viewBox="0 0 11 11"><path d="M2.2 10 V5.8 C2.2 3.4 4 2 6.4 2 H10" fill="none" stroke="#2a2a2a" stroke-width="0.85"/><path d="M3.4 9 V6.4" stroke="#bbb" stroke-width="0.5"/></svg>
<svg class="a" style="left:19.5px;top:289.1px;" width="11" height="11" viewBox="0 0 11 11"><path d="M2.2 10 V6.4 C2.2 3.4 4.4 2 7.2 2 H10" fill="none" stroke="#2a2a2a" stroke-width="0.85"/></svg>
<svg class="a" style="left:19.5px;top:303.5px;" width="11" height="11" viewBox="0 0 11 11"><path d="M2.2 8.8 L7.2 3.8" stroke="#b01828" stroke-width="2.8" stroke-linecap="round"/><path d="M2.6 8 L6.4 4.2" stroke="#e87880" stroke-width="0.6"/><path d="M7.6 3.2 L9.6 1.4" stroke="#999" stroke-width="1"/></svg>
<div class="a" style="left:38px;top:49.6px;width:111.6px;height:13.399999999999999px;background:#fff;box-sizing:border-box;border-top:0.9px solid #9d9a8a;border-left:0.9px solid #9d9a8a;border-bottom:0.8px solid #fff;border-right:0.8px solid #fff;"></div>
<svg class="a" style="left:38px;top:50px" width="111" height="1"><rect x="0.80" y="0.40" width="110.00" height="0.60" fill="#6a685e"/></svg>
<svg class="a" style="left:38px;top:50px" width="2" height="12"><rect x="0.80" y="0.40" width="0.60" height="11.60" fill="#6a685e"/></svg>
<div class="a" style="left:139.4px;top:51.1px;width:9.2px;height:10.799999999999999px;background:#ece9d8;box-sizing:border-box;border-top:0.7px solid #fff;border-left:0.7px solid #fff;border-right:0.9px solid #6f6d62;border-bottom:0.9px solid #6f6d62;"></div>
<svg class="a" style="left:139.4px;top:51.1px;" width="9.2" height="10.8" viewBox="0 0 9.2 10.8"><path d="M2 4.2 H7 L4.5 6.9 Z" fill="#000"/></svg>
<div class="a" style="left:169.6px;top:49.6px;width:58.599999999999994px;height:13.399999999999999px;background:#fff;box-sizing:border-box;border-top:0.9px solid #9d9a8a;border-left:0.9px solid #9d9a8a;border-bottom:0.8px solid #fff;border-right:0.8px solid #fff;"></div>
<svg class="a" style="left:170px;top:50px" width="58" height="1"><rect x="0.40" y="0.40" width="57.00" height="0.60" fill="#6a685e"/></svg>
<svg class="a" style="left:170px;top:50px" width="1" height="12"><rect x="0.40" y="0.40" width="0.60" height="11.60" fill="#6a685e"/></svg>
<div class="a" style="left:218.0px;top:51.1px;width:9.2px;height:10.799999999999999px;background:#ece9d8;box-sizing:border-box;border-top:0.7px solid #fff;border-left:0.7px solid #fff;border-right:0.9px solid #6f6d62;border-bottom:0.9px solid #6f6d62;"></div>
<svg class="a" style="left:218.0px;top:51.1px;" width="9.2" height="10.8" viewBox="0 0 9.2 10.8"><path d="M2 4.2 H7 L4.5 6.9 Z" fill="#000"/></svg>
<div class="a" style="left:232px;top:49.6px;width:99.60000000000002px;height:13.399999999999999px;background:#fff;box-sizing:border-box;border-top:0.9px solid #9d9a8a;border-left:0.9px solid #9d9a8a;border-bottom:0.8px solid #fff;border-right:0.8px solid #fff;"></div>
<svg class="a" style="left:232px;top:50px" width="99" height="1"><rect x="0.80" y="0.40" width="98.00" height="0.60" fill="#6a685e"/></svg>
<svg class="a" style="left:232px;top:50px" width="2" height="12"><rect x="0.80" y="0.40" width="0.60" height="11.60" fill="#6a685e"/></svg>
<div class="a" style="left:321.40000000000003px;top:51.1px;width:9.2px;height:10.799999999999999px;background:#ece9d8;box-sizing:border-box;border-top:0.7px solid #fff;border-left:0.7px solid #fff;border-right:0.9px solid #6f6d62;border-bottom:0.9px solid #6f6d62;"></div>
<svg class="a" style="left:321.40000000000003px;top:51.1px;" width="9.2" height="10.8" viewBox="0 0 9.2 10.8"><path d="M2 4.2 H7 L4.5 6.9 Z" fill="#000"/></svg>
<div class="a" style="left:336px;top:49.6px;width:77.60000000000002px;height:13.399999999999999px;background:#fff;box-sizing:border-box;border-top:0.9px solid #9d9a8a;border-left:0.9px solid #9d9a8a;border-bottom:0.8px solid #fff;border-right:0.8px solid #fff;"></div>
<svg class="a" style="left:336px;top:50px" width="77" height="1"><rect x="0.80" y="0.40" width="76.00" height="0.60" fill="#6a685e"/></svg>
<svg class="a" style="left:336px;top:50px" width="2" height="12"><rect x="0.80" y="0.40" width="0.60" height="11.60" fill="#6a685e"/></svg>
<div class="a" style="left:403.40000000000003px;top:51.1px;width:9.2px;height:10.799999999999999px;background:#ece9d8;box-sizing:border-box;border-top:0.7px solid #fff;border-left:0.7px solid #fff;border-right:0.9px solid #6f6d62;border-bottom:0.9px solid #6f6d62;"></div>
<svg class="a" style="left:403.40000000000003px;top:51.1px;" width="9.2" height="10.8" viewBox="0 0 9.2 10.8"><path d="M2 4.2 H7 L4.5 6.9 Z" fill="#000"/></svg>
<div class="a" style="left:418px;top:49.6px;width:74.19999999999999px;height:13.399999999999999px;background:#ece9d8;box-sizing:border-box;border-top:0.9px solid #9d9a8a;border-left:0.9px solid #9d9a8a;border-bottom:0.8px solid #fff;border-right:0.8px solid #fff;"></div>
<svg class="a" style="left:418px;top:50px" width="74" height="1"><rect x="0.80" y="0.40" width="72.60" height="0.60" fill="#b0ad9e"/></svg>
<svg class="a" style="left:418px;top:50px" width="2" height="12"><rect x="0.80" y="0.40" width="0.60" height="11.60" fill="#b0ad9e"/></svg>
<div class="a" style="left:482.0px;top:51.1px;width:9.2px;height:10.799999999999999px;background:#ece9d8;box-sizing:border-box;border-top:0.7px solid #fff;border-left:0.7px solid #fff;border-right:0.9px solid #6f6d62;border-bottom:0.9px solid #6f6d62;"></div>
<svg class="a" style="left:482.0px;top:51.1px;" width="9.2" height="10.8" viewBox="0 0 9.2 10.8"><path d="M2 4.2 H7 L4.5 6.9 Z" fill="#aca899"/></svg>
<svg class="a" style="left:40px;top:51px;" width="56" height="10" viewBox="0 0 56 10"><path d="M5 1.2 C2.6 1.2 2 3.4 3 4.8 C3.6 5.6 3.8 6 3.8 6.8 H6.2 C6.2 6 6.4 5.6 7 4.8 C8 3.4 7.4 1.2 5 1.2 Z" fill="#f6f04a" stroke="#6a6a00" stroke-width="0.7"/><rect x="4" y="7" width="2" height="1.5" fill="#222"/><rect x="11" y="1.6" width="7" height="6.6" fill="#f2f250"/><circle cx="14.5" cy="4.9" r="2.3" fill="#fafa78" stroke="#6e6e08" stroke-width="0.9"/><ellipse cx="24" cy="4.2" rx="3" ry="2.2" fill="#c8ccd4" stroke="#9aa0ac" stroke-width="0.6"/><rect x="24.2" y="4.4" width="4.6" height="3.6" fill="#e4e6ee" stroke="#a8aebc" stroke-width="0.6"/><rect x="32.2" y="4.6" width="5" height="3.8" fill="#5a5a10" stroke="#2e2e00" stroke-width="0.6"/><path d="M35.6 4.6 V3 C35.6 1 39.2 1 39.2 3 V4" fill="none" stroke="#2e2e00" stroke-width="0.9"/><rect x="33" y="5.4" width="3" height="1" fill="#b0b040"/><rect x="41.5" y="2.8" width="6" height="5.6" fill="#fff" stroke="#333" stroke-width="0.8"/><path d="M41.5 8.6 H47.8" stroke="#666" stroke-width="0.6"/></svg>
<span class="a t" id="t20" style="left:90.8px;top:52.30px;font-size:7.8px;line-height:7.8px;color:#111;">0</span>
<svg class="a" style="left:153.5px;top:50.6px;" width="10" height="9.4" viewBox="0 0 10 9.4"><rect x="1" y="2" width="7" height="5.8" fill="#d8d6cc" stroke="#9a988c" stroke-width="0.6"/><path d="M2 4 H7 M2 6 H7" stroke="#b0aea0" stroke-width="0.6"/><path d="M8.6 0.6 L4.6 4.8" stroke="#000" stroke-width="1.3"/><path d="M9.2 0.2 L9 3 L6.4 0.6 Z" fill="#000"/></svg>
<svg class="a" style="left:173.5px;top:53px;" width="7" height="7" viewBox="0 0 7 7"><rect x="0.4" y="0.4" width="5.6" height="5.6" fill="#fff" stroke="#222" stroke-width="0.8"/></svg>
<span class="a t" id="t21" style="left:182px;top:52.87px;font-size:7px;line-height:7px;color:#000;letter-spacing:-0.337px;">ByLayer</span>
<svg class="a" style="left:235px;top:56px" width="38" height="2"><rect x="0.60" y="0.60" width="37.00" height="0.80" fill="#222"/></svg>
<span class="a t" id="t22" style="left:276.5px;top:52.87px;font-size:7px;line-height:7px;color:#000;letter-spacing:-0.337px;">ByLayer</span>
<svg class="a" style="left:339px;top:56px" width="22" height="2"><rect x="0.40" y="0.60" width="21.40" height="0.80" fill="#222"/></svg>
<span class="a t" id="t23" style="left:364.8px;top:52.87px;font-size:7px;line-height:7px;color:#000;letter-spacing:-0.367px;">ByLayer</span>
<span class="a t" id="t24" style="left:424.4px;top:52.87px;font-size:7px;line-height:7px;color:#aca899;letter-spacing:-0.355px;">ByColor</span>
<svg class="a" style="left:0px;top:64px" width="36" height="2"><rect x="0.00" y="0.30" width="36.00" height="1.00" fill="#f8f7f0"/></svg>
<svg class="a" style="left:0px;top:65px" width="2" height="254"><rect x="0.60" y="0.00" width="0.70" height="254.00" fill="#fff"/></svg>
<svg class="a" style="left:16px;top:65px" width="1" height="254"><rect x="0.20" y="0.40" width="0.70" height="253.60" fill="#c5c2b0"/></svg>
<svg class="a" style="left:17px;top:65px" width="2" height="254"><rect x="0.40" y="0.40" width="0.70" height="253.60" fill="#fff"/></svg>
<svg class="a" style="left:33px;top:65px" width="2" height="254"><rect x="0.40" y="0.40" width="0.70" height="253.60" fill="#c5c2b0"/></svg>
<svg class="a" style="left:0px;top:318px" width="34" height="2"><rect x="0.60" y="0.90" width="33.40" height="0.70" fill="#c5c2b0"/></svg>
<svg class="a" style="left:1px;top:67px" width="15" height="1"><rect x="0.50" y="0.00" width="13.60" height="0.80" fill="#fdfcf8"/></svg>
<svg class="a" style="left:1px;top:67px" width="15" height="2"><rect x="0.50" y="0.80" width="13.60" height="0.60" fill="#c6c3b0"/></svg>
<svg class="a" style="left:1px;top:69px" width="15" height="1"><rect x="0.50" y="0.00" width="13.60" height="0.80" fill="#fdfcf8"/></svg>
<svg class="a" style="left:1px;top:69px" width="15" height="2"><rect x="0.50" y="0.80" width="13.60" height="0.60" fill="#c6c3b0"/></svg>
<svg class="a" style="left:18px;top:67px" width="15" height="1"><rect x="0.20" y="0.00" width="14.20" height="0.80" fill="#fdfcf8"/></svg>
<svg class="a" style="left:18px;top:67px" width="15" height="2"><rect x="0.20" y="0.80" width="14.20" height="0.60" fill="#c6c3b0"/></svg>
<svg class="a" style="left:18px;top:69px" width="15" height="1"><rect x="0.20" y="0.00" width="14.20" height="0.80" fill="#fdfcf8"/></svg>
<svg class="a" style="left:18px;top:69px" width="15" height="2"><rect x="0.20" y="0.80" width="14.20" height="0.60" fill="#c6c3b0"/></svg>
<svg class="a" style="left:35px;top:65px" width="753" height="517"><rect x="0.00" y="0.60" width="753.00" height="516.30" fill="#000"/></svg>
<svg class="a" style="left:0;top:0" width="800" height="640" viewBox="0 0 800 640"><path d="M145.6 240.9 H280.6 M386.2 189.1 H535.9 M614.6 189.1 H744.5 M730 228.8 H744.5" stroke="#b6b6b6" stroke-width="0.95" fill="none"/><path d="M280.6 240.9 V270.4 M386.2 189.1 V270.3 M744.5 189.1 V228.8 M125.6 257.8 L119.8 274.7 L206.7 304.3 L212.5 286.9 M212.5 286.9 V306 L472.5 304.4 V285.5 M232.80 270.20 A17.4 17.4 0 0 0 198.95 264.54 M430.40 270.30 A37.1 37.1 0 0 1 496.58 247.26 M467.1 268.3 L457.7 254.5 L575.3 174.1 L585.4 188.8 M541.13 235.21 A56.8 56.8 0 0 0 628.85 234.98 M584.7 207.1 L577 219.1 L636.8 257.8 L645.3 244.7 M666.20 229.00 A16.6 16.6 0 0 0 636.61 218.67 M644.8 244.7 V262.3 L728.7 264.6 V246.3" stroke="#17979a" stroke-width="1.25" fill="none"/><path d="M131.58 241.12 L213.77 269.17 A20.25 20.25 0 0 0 220.31 270.25 L460.31 270.25 A19.25 19.25 0 0 0 472.21 266.13 L556.21 200.07 A46.75 46.75 0 0 1 614.14 200.17 L644.55 224.26 A21.25 21.25 0 0 0 657.74 228.85 L728.70 228.85 " stroke="#d0d0d0" stroke-width="1.1" fill="none"/><path d="M125.92 257.68 L208.12 285.73 A37.75 37.75 0 0 0 220.31 287.75 L460.31 287.75 A36.75 36.75 0 0 0 483.03 279.89 L567.03 213.82 A29.25 29.25 0 0 1 603.28 213.89 L633.68 237.97 A38.75 38.75 0 0 0 657.74 246.35 L728.70 246.35 " stroke="#d0d0d0" stroke-width="1.1" fill="none"/><path d="M131.58 241.12 L125.92 257.68" stroke="#d0d0d0" stroke-width="1.1"/><path d="M728.70 228.85 L728.70 246.35" stroke="#d0d0d0" stroke-width="1.1"/><text x="163.5" y="291.05" text-anchor="middle" font-family="Liberation Sans,sans-serif" font-weight="bold" font-size="4.9" fill="#f0f0f0" stroke="#e8e8e8" stroke-width="0.25" textLength="12.6" lengthAdjust="spacingAndGlyphs">20.4402</text><text x="217.8" y="255.15" text-anchor="middle" font-family="Liberation Sans,sans-serif" font-weight="bold" font-size="4.9" fill="#f0f0f0" stroke="#e8e8e8" stroke-width="0.25" textLength="6.4" lengthAdjust="spacingAndGlyphs">157°</text><text x="281.0" y="257.15" text-anchor="middle" font-family="Liberation Sans,sans-serif" font-weight="bold" font-size="4.9" fill="#f0f0f0" stroke="#e8e8e8" stroke-width="0.25" textLength="11.4" lengthAdjust="spacingAndGlyphs">4.3084</text><text x="386.0" y="231.35" text-anchor="middle" font-family="Liberation Sans,sans-serif" font-weight="bold" font-size="4.9" fill="#f0f0f0" stroke="#e8e8e8" stroke-width="0.25" textLength="12.6" lengthAdjust="spacingAndGlyphs">18.3713</text><text x="342.5" y="306.95" text-anchor="middle" font-family="Liberation Sans,sans-serif" font-weight="bold" font-size="4.9" fill="#f0f0f0" stroke="#e8e8e8" stroke-width="0.25" textLength="12.8" lengthAdjust="spacingAndGlyphs">68.9617</text><text x="455.2" y="237.05" text-anchor="middle" font-family="Liberation Sans,sans-serif" font-weight="bold" font-size="4.9" fill="#f0f0f0" stroke="#e8e8e8" stroke-width="0.25" textLength="6.6" lengthAdjust="spacingAndGlyphs">142°</text><text x="516.3" y="216.05" text-anchor="middle" font-family="Liberation Sans,sans-serif" font-weight="bold" font-size="4.9" fill="#f0f0f0" stroke="#e8e8e8" stroke-width="0.25" textLength="12.6" lengthAdjust="spacingAndGlyphs">30.2364</text><text x="584.2" y="257.55" text-anchor="middle" font-family="Liberation Sans,sans-serif" font-weight="bold" font-size="4.9" fill="#f0f0f0" stroke="#e8e8e8" stroke-width="0.25" textLength="6.6" lengthAdjust="spacingAndGlyphs">104°</text><text x="607.1" y="239.85" text-anchor="middle" font-family="Liberation Sans,sans-serif" font-weight="bold" font-size="4.9" fill="#f0f0f0" stroke="#e8e8e8" stroke-width="0.25" textLength="11.8" lengthAdjust="spacingAndGlyphs">16.6533</text><text x="656.0" y="215.95" text-anchor="middle" font-family="Liberation Sans,sans-serif" font-weight="bold" font-size="4.9" fill="#f0f0f0" stroke="#e8e8e8" stroke-width="0.25" textLength="6.4" lengthAdjust="spacingAndGlyphs">146°</text><text x="686.4" y="265.15" text-anchor="middle" font-family="Liberation Sans,sans-serif" font-weight="bold" font-size="4.9" fill="#f0f0f0" stroke="#e8e8e8" stroke-width="0.25" textLength="13.0" lengthAdjust="spacingAndGlyphs">18.5410</text><text x="744.6" y="211.05" text-anchor="middle" font-family="Liberation Sans,sans-serif" font-weight="bold" font-size="4.9" fill="#f0f0f0" stroke="#e8e8e8" stroke-width="0.25" textLength="11.6" lengthAdjust="spacingAndGlyphs">14.3264</text><path d="M281 122.3 H321 M301.5 102 V142.6" stroke="#b4b4b4" stroke-width="0.9" fill="none"/><rect x="299.3" y="120.1" width="4.4" height="4.4" fill="none" stroke="#b4b4b4" stroke-width="0.8"/><g stroke="#d8d8d8" stroke-width="1" fill="none"><rect x="45" y="560.3" width="10.2" height="10"/><path d="M50.2 560.3 V515 M46 515.2 L50.2 503.8 L54.4 515.2 Z M50.2 515 V507"/><path d="M55.2 565.3 H99.6 M99.6 561 L111.4 565.3 L99.6 569.5 Z M99.6 565.3 H107"/><path d="M46.9 482.2 L51.4 488.6 L56.2 482.2 M51.4 488.6 V494.6"/><path d="M122.8 559.6 L132.2 571.6 M132.2 559.6 L122.8 571.6"/></g></svg>
<div class="a" style="left:788px;top:65.6px;width:11.2px;height:516.3px;background:linear-gradient(to right,#f3f1ec 0%,#fbfaf7 40%,#fefefb 100%);"></div>
<svg class="a" style="left:799px;top:65px" width="1" height="517"><rect x="0.20" y="0.60" width="0.80" height="516.30" fill="#ece9d8"/></svg>
<div class="a" style="left:788.6px;top:66.2px;width:9.8px;height:10px;background:linear-gradient(135deg,#cfdcff 0%,#c1d3fd 50%,#b4c8f8 100%);border-radius:1.4px;box-shadow:0 0 0 0.5px #fff inset, 0 0 0 0.5px #a9bce8;"></div>
<svg class="a" style="left:788.6px;top:66.2px;" width="9.8" height="10" viewBox="0 0 9.8 10"><path d="M2.3000000000000003 6.2 L4.9 3.6 L7.5 6.2" fill="none" stroke="#3d5cc0" stroke-width="1.6"/></svg>
<div class="a" style="left:788.6px;top:571.6px;width:9.8px;height:9.6px;background:linear-gradient(135deg,#cfdcff 0%,#c1d3fd 50%,#b4c8f8 100%);border-radius:1.4px;box-shadow:0 0 0 0.5px #fff inset, 0 0 0 0.5px #a9bce8;"></div>
<svg class="a" style="left:788.6px;top:571.6px;" width="9.8" height="9.6" viewBox="0 0 9.8 9.6"><path d="M2.3000000000000003 3.5999999999999996 L4.9 6.199999999999999 L7.5 3.5999999999999996" fill="none" stroke="#3d5cc0" stroke-width="1.6"/></svg>
<div class="a" style="left:788.7px;top:427.2px;width:9.8px;height:10.4px;background:linear-gradient(to right,#c8d8ff,#b8ccf8);border-radius:1.4px;box-shadow:0 0 0 0.5px #fff inset,0 0 0 0.5px #a9bce8;"></div>
<svg class="a" style="left:788.7px;top:427.2px;" width="10" height="10.4" viewBox="0 0 10 10.4"><path d="M3 3.8 H6.8 M3 5.2 H6.8 M3 6.6 H6.8" stroke="#e8f0ff" stroke-width="0.6"/></svg>
<svg class="a" style="left:35px;top:581px" width="753" height="11"><rect x="0.00" y="0.90" width="753.00" height="9.60" fill="#f5f4ee"/></svg>
<svg class="a" style="left:35px;top:581px" width="500" height="11"><rect x="0.00" y="0.90" width="500.00" height="9.60" fill="#ece9d8"/></svg>
<svg class="a" style="left:788px;top:581px" width="12" height="11"><rect x="0.00" y="0.90" width="12.00" height="9.60" fill="#ece9d8"/></svg>
<div class="a" style="left:34.6px;top:582.0px;width:45.4px;height:9.4px;background:#f2f0e4;box-sizing:border-box;border-left:0.7px solid #9a988a;border-bottom:0.6px solid #d8d5c2;"></div>
<svg class="a" style="left:46px;top:582px" width="1" height="9"><rect x="0.00" y="0.40" width="0.60" height="8.60" fill="#dddac8"/></svg>
<svg class="a" style="left:46px;top:582px" width="2" height="9"><rect x="0.60" y="0.40" width="0.60" height="8.60" fill="#fdfcf6"/></svg>
<svg class="a" style="left:57px;top:582px" width="1" height="9"><rect x="0.10" y="0.40" width="0.60" height="8.60" fill="#dddac8"/></svg>
<svg class="a" style="left:57px;top:582px" width="2" height="9"><rect x="0.70" y="0.40" width="0.60" height="8.60" fill="#fdfcf6"/></svg>
<svg class="a" style="left:68px;top:582px" width="1" height="9"><rect x="0.20" y="0.40" width="0.60" height="8.60" fill="#dddac8"/></svg>
<svg class="a" style="left:68px;top:582px" width="2" height="9"><rect x="0.80" y="0.40" width="0.60" height="8.60" fill="#fdfcf6"/></svg>
<svg class="a" style="left:35.2px;top:582.3px;" width="11" height="9" viewBox="0 0 11 9"><path d="M3.4 1.8 V7.2" stroke="#000" stroke-width="1.1"/><path d="M7.6 1.6 V7.4 L4.2 4.5 Z" fill="#000"/></svg>
<svg class="a" style="left:46.3px;top:582.3px;" width="11" height="9" viewBox="0 0 11 9"><path d="M7 1.6 V7.4 L3.6 4.5 Z" fill="#000"/></svg>
<svg class="a" style="left:57.4px;top:582.3px;" width="11" height="9" viewBox="0 0 11 9"><path d="M4 1.6 V7.4 L7.4 4.5 Z" fill="#000"/></svg>
<svg class="a" style="left:68.5px;top:582.3px;" width="11" height="9" viewBox="0 0 11 9"><path d="M7.6 1.8 V7.2" stroke="#000" stroke-width="1.1"/><path d="M3.4 1.6 V7.4 L6.8 4.5 Z" fill="#000"/></svg>
<svg class="a" style="left:80px;top:581.9px;" width="112" height="10" viewBox="0 0 112 10"><path d="M1.6 0 L5 9.3 H31.4 L34.6 0 Z" fill="#000"/><path d="M34.6 0 L31.6 6.6 Q31.2 9.2 33.6 9.2 H67.6 L70.8 0 Z" fill="#f4f2e6"/><path d="M34.6 0.4 L32 6.6 Q31.4 9.2 33.8 9.2 H67.6 L70.8 0.2" fill="none" stroke="#222" stroke-width="0.8"/><path d="M71.6 0 L68.8 6.6 Q68.4 9.2 70.8 9.2 H104.6 L107.8 0 Z" fill="#f4f2e6"/><path d="M71.6 0.4 L69 6.6 Q68.4 9.2 70.8 9.2 H104.6 L107.8 0.2" fill="none" stroke="#222" stroke-width="0.8"/></svg>
<span class="a t" id="t25" style="left:87.2px;top:583.14px;font-size:7.4px;line-height:7.4px;color:#fff;font-weight:bold;letter-spacing:-0.080px;">Model</span>
<span class="a t" id="t26" style="left:118.8px;top:583.37px;font-size:7px;line-height:7px;color:#000;letter-spacing:-0.265px;">Layout1</span>
<span class="a t" id="t27" style="left:155.2px;top:583.37px;font-size:7px;line-height:7px;color:#000;letter-spacing:-0.203px;">Layout2</span>
<div class="a" style="left:533px;top:582.2px;width:2.2px;height:9.2px;background:#ece9d8;box-sizing:border-box;border-left:0.7px solid #fff;border-right:0.8px solid #8a887b;"></div>
<div class="a" style="left:536px;top:582.3px;width:10px;height:9px;background:#ece9d8;box-sizing:border-box;border-top:0.7px solid #fff;border-left:0.7px solid #fff;border-right:0.9px solid #716f64;border-bottom:0.9px solid #716f64;"></div>
<svg class="a" style="left:536px;top:582.3px;" width="10" height="9" viewBox="0 0 10 9"><path d="M6.2 2 V7 L3.2 4.5 Z" fill="#000"/></svg>
<div class="a" style="left:777.6px;top:582.3px;width:9.8px;height:9px;background:#ece9d8;box-sizing:border-box;border-top:0.7px solid #fff;border-left:0.7px solid #fff;border-right:0.9px solid #716f64;border-bottom:0.9px solid #716f64;"></div>
<svg class="a" style="left:777.6px;top:582.3px;" width="9.8" height="9" viewBox="0 0 9.8 9"><path d="M3.8 2 V7 L6.8 4.5 Z" fill="#000"/></svg>
<div class="a" style="left:613.6px;top:582.3px;width:9px;height:9px;background:#ece9d8;box-sizing:border-box;border-top:0.7px solid #fff;border-left:0.7px solid #fff;border-right:0.9px solid #716f64;border-bottom:0.9px solid #716f64;"></div>
<svg class="a" style="left:0px;top:591px" width="800" height="9"><rect x="0.00" y="0.50" width="800.00" height="8.00" fill="#ece9d8"/></svg>
<svg class="a" style="left:0px;top:592px" width="800" height="2"><rect x="0.00" y="0.70" width="800.00" height="1.10" fill="#6e6c60"/></svg>
<svg class="a" style="left:0px;top:593px" width="800" height="2"><rect x="0.00" y="0.80" width="800.00" height="1.20" fill="#fbfaf4"/></svg>
<svg class="a" style="left:0px;top:596px" width="800" height="2"><rect x="0.00" y="0.30" width="800.00" height="1.10" fill="#6e6c60"/></svg>
<svg class="a" style="left:0px;top:597px" width="800" height="2"><rect x="0.00" y="0.40" width="800.00" height="1.00" fill="#d8d5c4"/></svg>
<div class="a" style="left:1.6px;top:598.8px;width:797px;height:27.0px;background:#fff;box-sizing:border-box;border-top:1.4px solid #605e54;border-left:1.1px solid #76746a;"></div>
<svg class="a" style="left:1px;top:615px" width="798" height="1"><rect x="0.60" y="0.00" width="797.00" height="1.00" fill="#d8d6cc"/></svg>
<svg class="a" style="left:1px;top:598px" width="2" height="28"><rect x="0.60" y="0.60" width="1.20" height="27.00" fill="#55534a"/></svg>
<span class="a t" id="t28" style="left:3.7px;top:599.98px;font-size:8.25px;line-height:8.25px;color:#2a2a2a;font-family:'Liberation Mono',monospace;">Regenerating model.</span>
<span class="a t" id="t29" style="left:3.7px;top:607.68px;font-size:8.25px;line-height:8.25px;color:#2a2a2a;font-family:'Liberation Mono',monospace;">AutoCAD menu utilities loaded.</span>
<span class="a t" id="t30" style="left:3.7px;top:617.98px;font-size:8.25px;line-height:8.25px;color:#2a2a2a;font-family:'Liberation Mono',monospace;">Command:</span>
<svg class="a" style="left:787px;top:599px" width="11" height="16"><rect x="0.60" y="0.80" width="10.40" height="15.20" fill="#f6f5f0"/></svg>
<div class="a" style="left:788.2px;top:600.6px;width:9px;height:6.6px;background:linear-gradient(135deg,#cfdcff 0%,#c1d3fd 50%,#b4c8f8 100%);border-radius:1.4px;box-shadow:0 0 0 0.5px #fff inset, 0 0 0 0.5px #a9bce8;"></div>
<svg class="a" style="left:788.2px;top:600.6px;" width="9" height="6.6" viewBox="0 0 9 6.6"><path d="M1.9 4.5 L4.5 1.9 L7.1 4.5" fill="none" stroke="#3d5cc0" stroke-width="1.6"/></svg>
<div class="a" style="left:788.2px;top:608.2px;width:9px;height:6.6px;background:linear-gradient(135deg,#cfdcff 0%,#c1d3fd 50%,#b4c8f8 100%);border-radius:1.4px;box-shadow:0 0 0 0.5px #fff inset, 0 0 0 0.5px #a9bce8;"></div>
<svg class="a" style="left:788.2px;top:608.2px;" width="9" height="6.6" viewBox="0 0 9 6.6"><path d="M1.9 2.0999999999999996 L4.5 4.699999999999999 L7.1 2.0999999999999996" fill="none" stroke="#3d5cc0" stroke-width="1.6"/></svg>
<svg class="a" style="left:746px;top:616px" width="41" height="10"><rect x="0.00" y="0.20" width="40.40" height="9.20" fill="#f5f4ee"/></svg>
<div class="a" style="left:746px;top:616.3px;width:9.4px;height:9px;background:#ece9d8;box-sizing:border-box;border-top:0.7px solid #fff;border-left:0.7px solid #fff;border-right:0.9px solid #716f64;border-bottom:0.9px solid #716f64;"></div>
<svg class="a" style="left:746px;top:616.3px;" width="9.4" height="9" viewBox="0 0 9.4 9"><path d="M5.8 2.2 V6.8 L3 4.5 Z" fill="#000"/></svg>
<div class="a" style="left:755.4px;top:616.3px;width:9.8px;height:9px;background:#ece9d8;box-sizing:border-box;border-top:0.7px solid #fff;border-left:0.7px solid #fff;border-right:0.9px solid #716f64;border-bottom:0.9px solid #716f64;"></div>
<div class="a" style="left:776.4px;top:616.3px;width:9.8px;height:9px;background:#ece9d8;box-sizing:border-box;border-top:0.7px solid #fff;border-left:0.7px solid #fff;border-right:0.9px solid #716f64;border-bottom:0.9px solid #716f64;"></div>
<svg class="a" style="left:776.4px;top:616.3px;" width="9.8" height="9" viewBox="0 0 9.8 9"><path d="M3.8 2.2 V6.8 L6.6 4.5 Z" fill="#000"/></svg>
<svg class="a" style="left:786px;top:616px" width="13" height="10"><rect x="0.60" y="0.00" width="12.00" height="10.00" fill="#ece9d8"/></svg>
<svg class="a" style="left:0px;top:625px" width="800" height="15"><rect x="0.00" y="0.80" width="800.00" height="14.20" fill="#ece9d8"/></svg>
<svg class="a" style="left:0px;top:625px" width="800" height="2"><rect x="0.00" y="0.80" width="800.00" height="0.70" fill="#d4d1c0"/></svg>
<div class="a" style="left:5px;top:630.8px;width:149.4px;height:8px;background:#ece9d8;box-sizing:border-box;border-top:0.8px solid #8a887b;border-left:0.8px solid #8a887b;border-right:0.7px solid #fff;"></div>
<span class="a t" id="t31" style="left:7.8px;top:631.82px;font-size:7.3px;line-height:7.3px;color:#000;letter-spacing:-0.204px;">85.7602, 93.1276, 0.0000</span>
<span class="a t" id="t32" style="left:158px;top:630.87px;font-size:8.3px;line-height:8.3px;color:#1a1a1a;transform:scaleX(0.8144);transform-origin:0 0;">SNAP</span>
<span class="a t" id="t33" style="left:179.8px;top:630.87px;font-size:8.3px;line-height:8.3px;color:#1a1a1a;transform:scaleX(0.7904);transform-origin:0 0;">GRID</span>
<span class="a t" id="t34" style="left:200px;top:630.87px;font-size:8.3px;line-height:8.3px;color:#1a1a1a;transform:scaleX(0.8252);transform-origin:0 0;">ORTHO</span>
<div class="a" style="left:226.4px;top:630.2px;width:26.599999999999994px;height:8px;background:#ece9d8;box-sizing:border-box;border-top:1px solid #55534a;border-left:1px solid #55534a;border-right:0.8px solid #fff;"></div>
<span class="a t" id="t35" style="left:228.8px;top:630.87px;font-size:8.3px;line-height:8.3px;color:#1a1a1a;transform:scaleX(0.8102);transform-origin:0 0;">POLAR</span>
<div class="a" style="left:253.8px;top:630.2px;width:26.19999999999999px;height:8px;background:#ece9d8;box-sizing:border-box;border-top:1px solid #55534a;border-left:1px solid #55534a;border-right:0.8px solid #fff;"></div>
<span class="a t" id="t36" style="left:255.5px;top:630.87px;font-size:8.3px;line-height:8.3px;color:#1a1a1a;transform:scaleX(0.7880);transform-origin:0 0;">OSNAP</span>
<div class="a" style="left:281.2px;top:630.2px;width:28.80000000000001px;height:8px;background:#ece9d8;box-sizing:border-box;border-top:1px solid #55534a;border-left:1px solid #55534a;border-right:0.8px solid #fff;"></div>
<span class="a t" id="t37" style="left:283px;top:630.87px;font-size:8.3px;line-height:8.3px;color:#1a1a1a;transform:scaleX(0.7577);transform-origin:0 0;">OTRACK</span>
<span class="a t" id="t38" style="left:313px;top:630.87px;font-size:8.3px;line-height:8.3px;color:#1a1a1a;transform:scaleX(0.8518);transform-origin:0 0;">LWT</span>
<div class="a" style="left:330px;top:630.2px;width:26.19999999999999px;height:8px;background:#ece9d8;box-sizing:border-box;border-top:1px solid #55534a;border-left:1px solid #55534a;border-right:0.8px solid #fff;"></div>
<span class="a t" id="t39" style="left:332px;top:630.87px;font-size:8.3px;line-height:8.3px;color:#1a1a1a;transform:scaleX(0.7521);transform-origin:0 0;">MODEL</span>
<div class="a" style="left:0px;top:637.6px;width:800px;height:2.4px;background:linear-gradient(to bottom,#9cc0f4 0%,#3c80e6 40%,#2462d8 100%);"></div>
</div></body></html>
